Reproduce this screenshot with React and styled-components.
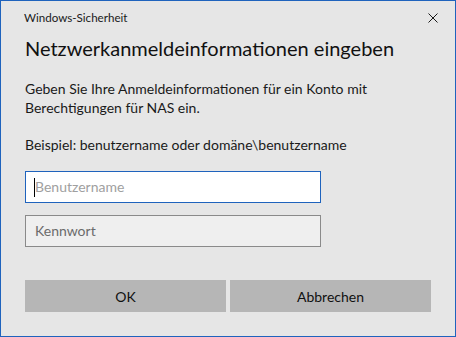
import React from 'react';
import styled, { createGlobalStyle } from 'styled-components';

const GlobalStyle = createGlobalStyle`
  html, body {
    margin: 0;
    padding: 0;
    background: #e6e6e6;
  }
  * {
    box-sizing: border-box;
  }
`;

const App = () => {
  return (
    <>
      <GlobalStyle />
      <Dialog>
        <TitleBar>
          <TitleText>Windows-Sicherheit</TitleText>
          <CloseButton aria-label="Schließen">
            <svg width="10" height="10" viewBox="0 0 10 10">
              <path d="M0.5 0.5 L9.5 9.5 M9.5 0.5 L0.5 9.5" stroke="#1a1a1a" strokeWidth="1" />
            </svg>
          </CloseButton>
        </TitleBar>
        <Content>
          <Heading>Netzwerkanmeldeinformationen eingeben</Heading>
          <Paragraph>
            Geben Sie Ihre Anmeldeinformationen für ein Konto mit
            <br />
            Berechtigungen für NAS ein.
          </Paragraph>
          <Paragraph gap={19}>Beispiel: benutzername oder domäne\benutzername</Paragraph>
          <Fields>
            <Field focused>
              <Caret />
              <Placeholder>Benutzername</Placeholder>
            </Field>
            <Field>
              <Placeholder dark>Kennwort</Placeholder>
            </Field>
          </Fields>
        </Content>
        <ButtonRow>
          <DialogButton>OK</DialogButton>
          <DialogButton>Abbrechen</DialogButton>
        </ButtonRow>
      </Dialog>
    </>
  );
};

const Dialog = styled.div`
  width: 456px;
  height: 337px;
  background-color: #e6e6e6;
  border: 1px solid #1f63bd;
  display: flex;
  flex-direction: column;
  font-family: Lato, 'Noto Sans', sans-serif;
  color: #1a1a1a;
`;

const TitleBar = styled.div`
  height: 32px;
  display: flex;
  align-items: center;
  justify-content: space-between;
  padding: 0 17px 0 23px;
`;

const TitleText = styled.div`
  font-size: 11.6px;
  color: #1a1a1a;
`;

const CloseButton = styled.div`
  width: 10px;
  height: 10px;
  display: flex;
  margin-top: 2px;

  svg {
    display: block;
  }
`;

const Content = styled.div`
  padding: 0 24px;
  display: flex;
  flex-direction: column;
`;

const Heading = styled.div`
  font-size: 20px;
  line-height: 28px;
  margin-top: 1px;
  color: #111;
`;

const Paragraph = styled.div`
  font-size: 14px;
  line-height: 18.5px;
  margin-top: ${(p) => p.gap || 18}px;
  color: #1a1a1a;
`;

const Fields = styled.div`
  display: flex;
  flex-direction: column;
  gap: 12px;
  margin-top: 16px;
  width: 296px;
`;

const Field = styled.div`
  position: relative;
  height: 32px;
  border: 1px solid ${(p) => (p.focused ? '#1f63bd' : '#8a8a8a')};
  background-color: ${(p) => (p.focused ? '#ffffff' : '#efefef')};
  display: flex;
  align-items: center;
  padding-left: 9px;
`;

const Caret = styled.span`
  position: absolute;
  left: 8px;
  top: 6px;
  width: 1px;
  height: 19px;
  background-color: #000;
`;

const Placeholder = styled.span`
  font-size: 14px;
  color: ${(p) => (p.dark ? '#6b6b6b' : '#a0a0a0')};
`;

const ButtonRow = styled.div`
  margin-top: auto;
  margin-bottom: 24px;
  padding: 0 24px;
  display: flex;
  gap: 4px;
`;

const DialogButton = styled.div`
  flex: 1;
  height: 32px;
  background-color: #b6b6b6;
  display: flex;
  align-items: center;
  justify-content: center;
  font-size: 14px;
  color: #111;
`;

export default App;
